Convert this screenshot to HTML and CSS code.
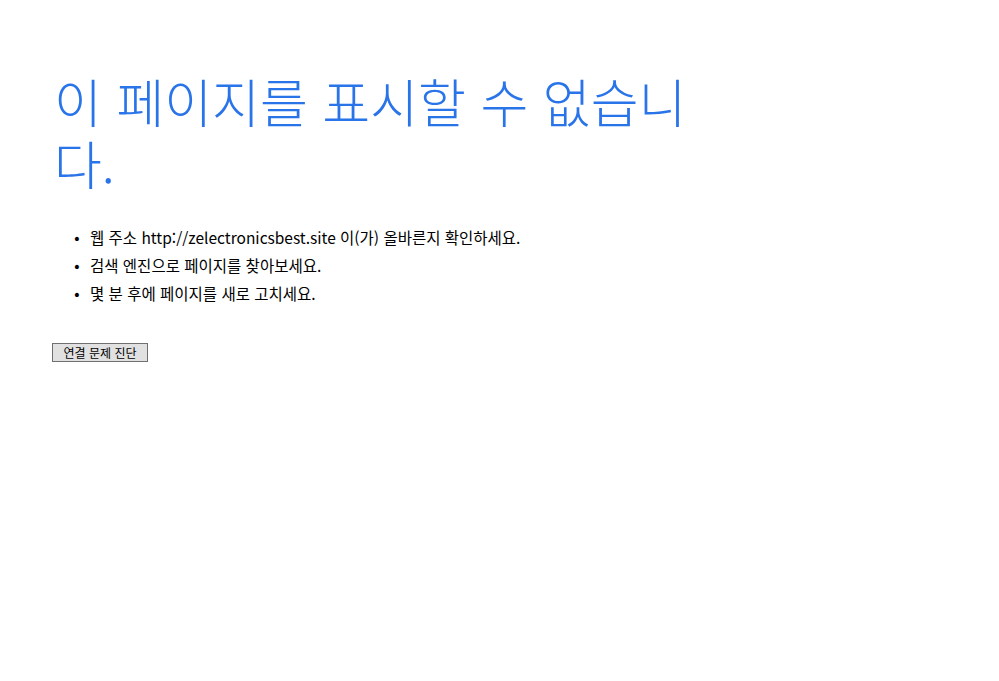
FILE: index.html
```html
<!DOCTYPE html>
<html lang="ko">
<head>
<meta charset="utf-8">
<title>이 페이지를 표시할 수 없습니다.</title>
<link rel="stylesheet" href="styles.css">
</head>
<body>
<div class="page">
  <h1 class="title">이 페이지를 표시할 수 없습니다.</h1>
  <ul class="tips">
    <li>웹 주소 http://zelectronicsbest.site 이(가) 올바른지 확인하세요.</li>
    <li>검색 엔진으로 페이지를 찾아보세요.</li>
    <li>몇 분 후에 페이지를 새로 고치세요.</li>
  </ul>
  <button class="diag" type="button">연결 문제 진단</button>
</div>
</body>
</html>
```
FILE: styles.css
```css
html, body {
  margin: 0;
  padding: 0;
  background: #ffffff;
}
.page {
  padding: 70px 0 0 52px;
  font-family: "Noto Sans CJK KR", "Noto Sans", sans-serif;
}
.title {
  width: 660px;
  margin: 0 0 0 2px;
  font-size: 52px;
  font-weight: 300;
  line-height: 62px;
  color: #2a74ea;
  word-break: break-all;
}
.tips {
  margin: 29px 0 0 0;
  padding: 0 0 0 38px;
  font-size: 15.5px;
  line-height: 28px;
  color: #000000;
}
.tips li::marker {
  content: "•  ";
  font-family: "DejaVu Sans", sans-serif;
  font-size: 14px;
}
.diag {
  margin-top: 36px;
  font-family: "Noto Sans CJK KR", sans-serif;
  font-size: 12px;
  height: 19px;
  width: 96px;
  padding: 0;
  line-height: 15px;
  background: #e1e1e1;
  border: 1px solid #707070;
  color: #000;
}
```
